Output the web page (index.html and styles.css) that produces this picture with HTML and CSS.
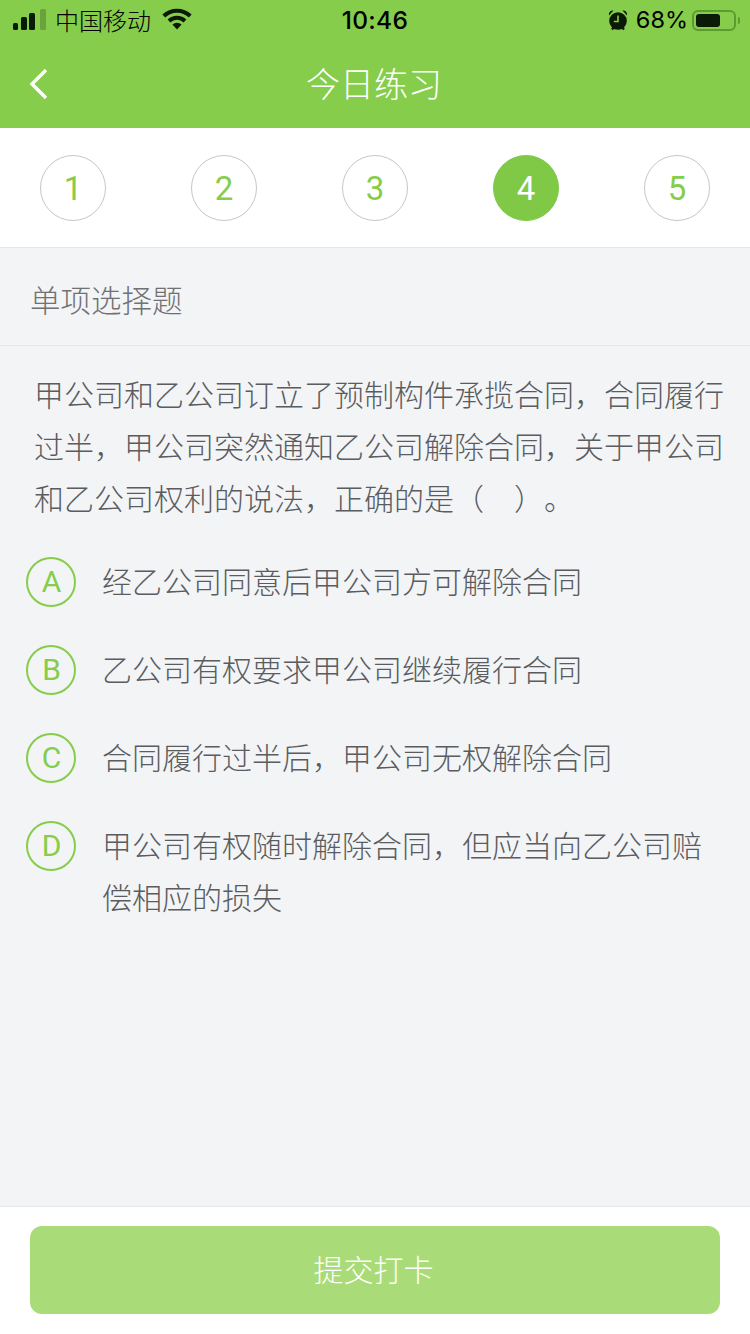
FILE: index.html
```html
<!DOCTYPE html>
<html lang="zh-CN">
<head>
<meta charset="utf-8">
<title>今日练习</title>
<link rel="stylesheet" href="styles.css">
</head>
<body>
<div class="page">
  <header class="header">
    <div class="status">
      <div class="status-left">
        <svg class="signal" width="33" height="21" viewBox="0 0 33 21"><rect x="0" y="14" width="5" height="7" rx="1.5" fill="#0b1a06"/><rect x="8" y="8" width="6" height="13" rx="1.5" fill="#0b1a06"/><rect x="16" y="4" width="6" height="17" rx="1.5" fill="#0b1a06"/><rect x="27" y="0" width="6" height="21" rx="1.5" fill="#6aa33c"/></svg>
        <span class="carrier">中国移动</span>
        <svg class="wifi" width="30" height="22" viewBox="0 0 30 22"><path d="M1.8 8a19.2 19.2 0 0 1 26.4 0" fill="none" stroke="#0b1a06" stroke-width="4.2"/><path d="M7 13a11.8 11.8 0 0 1 16 0" fill="none" stroke="#0b1a06" stroke-width="4"/><path d="M10.4 16.4a7 7 0 0 1 9.2 0L15 21.5z" fill="#0b1a06"/></svg>
      </div>
      <div class="clock">10:46</div>
      <div class="status-right">
        <svg class="alarm" width="20" height="22" viewBox="0 0 20 22"><circle cx="10" cy="12" r="8.8" fill="#0b1a06"/><path d="M4 20.5 6 18M16 20.5 14 18" stroke="#0b1a06" stroke-width="2.2" fill="none"/><path d="M1 6.5C.5 3.5 2.5 1.5 5.5 1.6zM19 6.5C19.5 3.5 17.5 1.5 14.500 1.6z" fill="#0b1a06"/><path d="M10 6.500v6H5.800" fill="none" stroke="#86cd4b" stroke-width="1.6"/></svg>
        <span class="percent">68%</span>
        <div class="battery"><div class="battery-fill"></div></div>
        <div class="battery-tip"></div>
      </div>
    </div>
    <nav class="nav">
      <svg class="back" width="20" height="32" viewBox="0 0 20 32"><path d="M17 2 3 16l14 14" fill="none" stroke="#fff" stroke-width="3.4"/></svg>
      <h1 class="title">今日练习</h1>
    </nav>
  </header>
  <div class="steps">
    <div class="step">1</div>
    <div class="step">2</div>
    <div class="step">3</div>
    <div class="step active">4</div>
    <div class="step">5</div>
  </div>
  <div class="kind">单项选择题</div>
  <main class="content">
    <p class="question">甲公司和乙公司订立了预制构件承揽合同，合同履行过半，甲公司突然通知乙公司解除合同，关于甲公司和乙公司权利的说法，正确的是（　）。</p>
    <ul class="options">
      <li class="option"><span class="letter">A</span><span class="text">经乙公司同意后甲公司方可解除合同</span></li>
      <li class="option"><span class="letter">B</span><span class="text">乙公司有权要求甲公司继续履行合同</span></li>
      <li class="option"><span class="letter">C</span><span class="text">合同履行过半后，甲公司无权解除合同</span></li>
      <li class="option"><span class="letter">D</span><span class="text">甲公司有权随时解除合同，但应当向乙公司赔偿相应的损失</span></li>
    </ul>
  </main>
  <footer class="footer">
    <button class="submit" type="button">提交打卡</button>
  </footer>
</div>
</body>
</html>
```
FILE: styles.css
```css
* { box-sizing: border-box; }
html, body { margin: 0; padding: 0; }
body {
  font-family: "Noto Sans CJK SC", "Liberation Sans", sans-serif;
  background: #f3f4f6;
  text-spacing-trim: space-all;
}
.page {
  width: 750px;
  height: 1334px;
  display: flex;
  flex-direction: column;
  overflow: hidden;
}
.header { background: #86cd4b; height: 128px; flex: none; }
.status {
  height: 40px;
  padding: 0 10px 0 13px;
  display: flex;
  align-items: center;
  justify-content: space-between;
  color: #000;
  position: relative;
}
.status-left, .status-right { display: flex; align-items: center; }
.signal { margin-top: -1px; }
.carrier { font-size: 24px; margin-left: 9px; line-height: 40px; font-weight: 300; }
.wifi { margin-left: 11px; margin-top: -2px; }
.clock {
  position: absolute;
  left: 0;
  right: 0;
  text-align: center;
  font: 500 24.500px/42px Inter, "Liberation Sans", sans-serif;
  letter-spacing: 0.3px;
}
.alarm { margin-right: 8px; }
.percent { font: 400 23.500px/42px Inter, "Liberation Sans", sans-serif; margin-right: 4px; }
.battery {
  width: 44px;
  height: 21px;
  border: 2px solid #5d9a31;
  border-radius: 6px;
  padding: 2px;
}
.battery-fill { width: 24px; height: 13px; background: #0b1a06; border-radius: 3px; }
.battery-tip { width: 2px; height: 7px; background: #5d9a31; margin-left: 2px; border-radius: 0 2px 2px 0; }
.nav {
  height: 88px;
  position: relative;
  display: flex;
  align-items: center;
  justify-content: center;
}
.back { position: absolute; left: 29px; top: 28px; }
.title {
  margin: -2px 2px 0 0;
  font-size: 34px;
  font-weight: 300;
  color: #fff;
  line-height: 88px;
}
.steps {
  flex: none;
  height: 120px;
  padding: 27px 40px 0;
  background: #fff;
  border-bottom: 1px solid #e6e7e9;
  display: flex;
  justify-content: space-between;
  align-items: flex-start;
}
.step {
  width: 66px;
  height: 66px;
  border: 1px solid #c6c6c2;
  border-radius: 50%;
  display: flex;
  align-items: center;
  justify-content: center;
  font: 400 33px/1 Roboto, "Liberation Sans", sans-serif;
  color: #86cd4b;
}
.step.active { background: #7fc947; border-color: #7fc947; color: #fff; }
.kind {
  flex: none;
  height: 98px;
  padding: 0 30px;
  border-bottom: 1px solid #e6e7e9;
  font-size: 30.500px;
  font-weight: 300;
  line-height: 103px;
  color: #6f7174;
}
.content { flex: 1; padding: 21px 25px 0 25px; }
.question {
  margin: 0 0 31px;
  padding-left: 9px;
  font-size: 30px;
  line-height: 52px;
  font-weight: 300;
  color: #5a5c5f;
}
.options {
  list-style: none;
  margin: 0;
  padding: 0;
  display: flex;
  flex-direction: column;
  gap: 36px;
}
.option { display: flex; align-items: flex-start; gap: 26px; }
.letter {
  flex: none;
  width: 50px;
  height: 50px;
  margin: 3px 0 -1px 1px;
  padding-left: 1px;
  border: 2px solid #86cd4b;
  border-radius: 50%;
  display: flex;
  align-items: center;
  justify-content: center;
  font: 400 30px/1 Roboto, "Liberation Sans", sans-serif;
  color: #86cd4b;
}
.text {
  font-size: 30px;
  line-height: 52px;
  font-weight: 300;
  color: #5a5c5f;
}
.footer {
  flex: none;
  height: 128px;
  padding: 19px 30px 0;
  background: #fff;
  border-top: 1px solid #e6e7e9;
}
.submit {
  display: block;
  width: 690px;
  height: 88px;
  border: 0;
  border-radius: 12px;
  background: #a9dc78;
  color: #fff;
  font-family: inherit;
  font-size: 30px;
  font-weight: 300;
  padding: 0 3px 4px 0;
}
```
